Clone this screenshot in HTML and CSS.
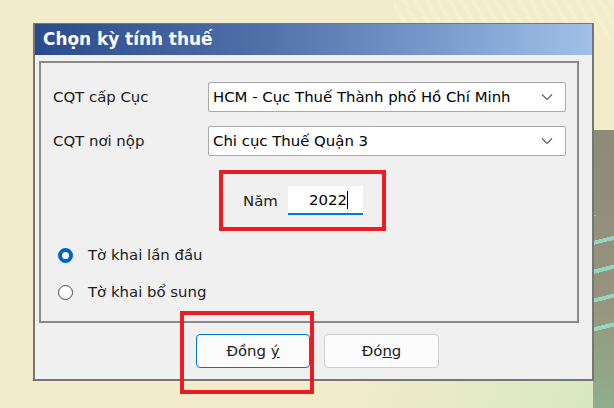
FILE: index.html
```html
<!DOCTYPE html>
<html lang="vi">
<head>
  <meta charset="UTF-8" />
  <title>Chọn kỳ tính thuế</title>
  <link rel="stylesheet" href="styles.css">
</head>
<body>
  <div class="dialog">
    <div class="title-bar">Chọn kỳ tính thuế</div>
    <div class="dialog-body">
      <div class="group">
        <div class="field-row">
          <label class="field-label">CQT cấp Cục</label>
          <div class="combo">
            <span>HCM - Cục Thuế Thành phố Hồ Chí Minh</span>
            <svg class="chevron" width="12" height="8" viewBox="0 0 12 8"><path d="M1 1.5 L6 6.5 L11 1.5" fill="none" stroke="#606060" stroke-width="1.2"/></svg>
          </div>
        </div>
        <div class="field-row">
          <label class="field-label">CQT nơi nộp</label>
          <div class="combo">
            <span>Chi cục Thuế Quận 3</span>
            <svg class="chevron" width="12" height="8" viewBox="0 0 12 8"><path d="M1 1.5 L6 6.5 L11 1.5" fill="none" stroke="#606060" stroke-width="1.2"/></svg>
          </div>
        </div>
        <div class="year-box">
          <label class="year-label">Năm</label>
          <div class="year-input">2022<span class="caret"></span></div>
        </div>
        <div class="radio-list">
          <div class="radio-item">
            <span class="radio checked"></span>
            <span>Tờ khai lần đầu</span>
          </div>
          <div class="radio-item">
            <span class="radio"></span>
            <span>Tờ khai bổ sung</span>
          </div>
        </div>
      </div>
      <div class="buttons">
        <button class="btn btn-default">Đồn<u>g</u> <u>ý</u></button>
        <button class="btn">Đó<u>n</u>g</button>
        <div class="highlight"></div>
      </div>
    </div>
  </div>
</body>
</html>
```

FILE: styles.css
```css
* {
  box-sizing: border-box;
  margin: 0;
  padding: 0;
}

html, body {
  height: 100%;
}

body {
  font-family: 'DejaVu Sans', Tahoma, sans-serif;
  font-size: 14.9px;
  color: #1b1b1b;
  overflow: hidden;
  padding: 23px 0 0 33px;
  background:
    repeating-linear-gradient(-14deg, transparent 0 18px, rgba(150, 220, 200, 0.9) 18px 22px, transparent 22px 28px) right 0 top 215px / 21px 130px no-repeat,
    linear-gradient(180deg, #8d8b76 0, #96947d 60%, #8fae8c 100%) right 0 top 130px / 21px 278px no-repeat,
    linear-gradient(100deg, transparent 0 55%, rgba(210, 232, 190, 0.9) 100%) left 0 bottom 0 / 100% 40px no-repeat,
    repeating-linear-gradient(60deg, #f3ecca 0 6px, #f6f0d3 6px 10px) right 0 top 0 / 220px 40px no-repeat,
    #f3ecca;
}

.dialog {
  width: 561px;
  height: 358px;
  background: #f0f0f0;
  border: 2px solid #767676;
  border-top-width: 1px;
  display: flex;
  flex-direction: column;
}

.title-bar {
  height: 31px;
  background: linear-gradient(90deg, #2a4b8d 0%, #4f6fa9 40%, #7d9fcf 75%, #9fc1e8 100%);
  color: #fff;
  font-weight: bold;
  font-size: 16.9px;
  padding: 5px 0 0 8px;
}

.dialog-body {
  position: relative;
  padding: 6px 13px 0 4px;
}

.group {
  height: 262px;
  border: 2px solid #8a8a8a;
  padding: 19px 11px 0 12px;
}

.field-row {
  display: flex;
  align-items: center;
  height: 30px;
  margin-bottom: 14px;
}

.field-label {
  flex: 0 0 155px;
}

.combo {
  flex: 1;
  height: 30px;
  background: #fff;
  border: 1px solid #a9a9a9;
  border-radius: 2px;
  display: flex;
  align-items: center;
  justify-content: space-between;
  padding: 0 12px 0 4px;
  color: #000;
}

.year-box {
  width: 167px;
  height: 61px;
  margin-left: 166px;
  border: 4px solid #ec1c24;
  display: flex;
  align-items: center;
  padding-left: 20px;
}

.year-label {
  width: 45px;
}

.year-input {
  width: 75px;
  height: 29px;
  background: #fff;
  border-bottom: 2px solid #0078d4;
  text-align: center;
  padding-top: 5px;
  padding-left: 6px;
  color: #000;
}

.caret {
  display: inline-block;
  width: 1px;
  height: 18px;
  background: #000;
  vertical-align: -4px;
}

.radio-list {
  margin-top: 13px;
  padding-left: 5px;
}

.radio-item {
  display: flex;
  align-items: center;
  gap: 15px;
  height: 22px;
  margin-bottom: 15px;
}

.radio {
  width: 15px;
  height: 15px;
  border-radius: 50%;
  border: 1px solid #444;
  background: #fff;
}

.radio.checked {
  border: 4.5px solid #0062c4;
}

.buttons {
  display: flex;
  gap: 14px;
  padding: 11px 0 0 157px;
}

.btn {
  font-family: 'DejaVu Sans', Tahoma, sans-serif;
  font-size: 14.9px;
  color: #1b1b1b;
  width: 115px;
  height: 34px;
  background: #fbfbfb;
  border: 1px solid #cfcfcf;
  border-radius: 4px;
}

.btn-default {
  border: 1px solid #0078d4;
  width: 114px;
}

.highlight {
  position: absolute;
  left: 145px;
  top: 256px;
  width: 134px;
  height: 83px;
  border: 4px solid #ec1c24;
}
```
